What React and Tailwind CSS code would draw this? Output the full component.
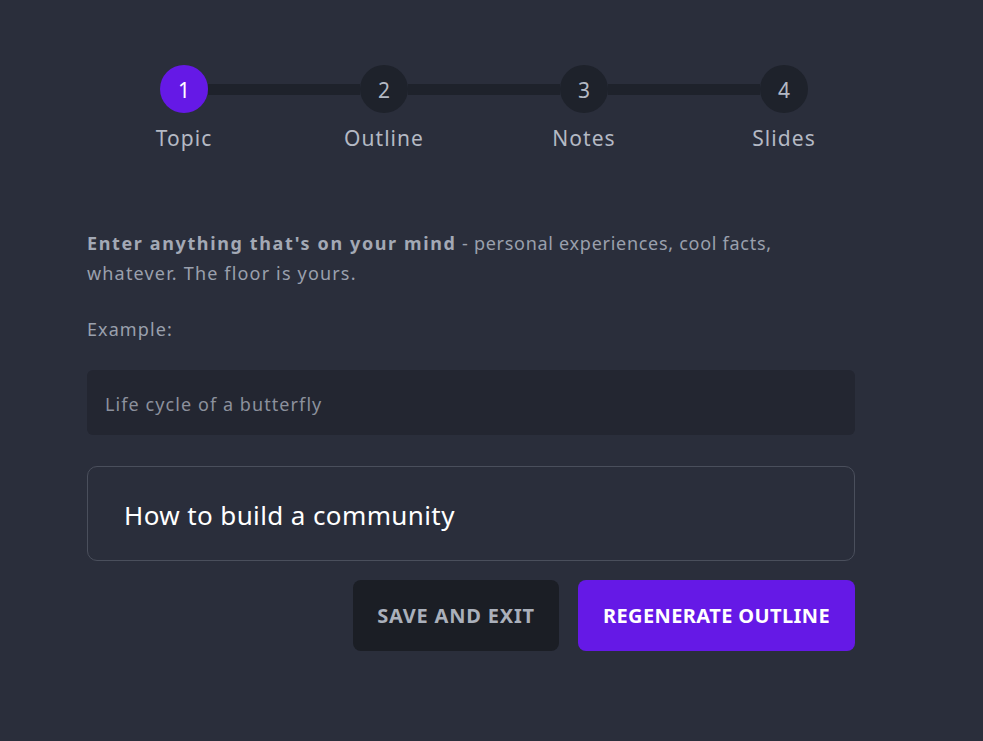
const steps = [
  { n: 1, label: 'Topic', active: true },
  { n: 2, label: 'Outline' },
  { n: 3, label: 'Notes' },
  { n: 4, label: 'Slides' },
];

export default function App() {
  return (
    <div className="min-h-screen w-full bg-[#2a2e3b] font-['Noto_Sans',sans-serif]">
      <div className="w-[768px] ml-[87px] pt-[65px]">
        {/* Stepper */}
        <div className="flex items-start w-[648px] ml-[73px]">
          {steps.map((s, i) => (
            <div key={s.n} className="contents">
              {i > 0 && <div className="flex-1 h-[11px] mt-[19px] bg-[#1e222b]" />}
              <div className="w-12 flex flex-col items-center">
                <div
                  className={`w-12 h-12 rounded-full flex items-center justify-center pt-[3px] text-[21px] ${
                    s.active ? 'bg-[#6519e6] text-white' : 'bg-[#1e222b] text-[#b4b9c4]'
                  }`}
                >
                  {s.n}
                </div>
                <span className="mt-[10px] text-[21px] leading-[30px] tracking-[0.05em] text-[#b4b9c4] whitespace-nowrap">
                  {s.label}
                </span>
              </div>
            </div>
          ))}
        </div>

        {/* Intro */}
        <p className="mt-[75px] text-[18px] leading-[30px] text-[#9aa0ad] whitespace-nowrap">
          <span className="font-bold tracking-[0.09em] text-[#a3a9b5]">Enter anything that's on your mind</span>
          <span className="tracking-[0.04em]"> - personal experiences, cool facts,</span>
          <br />
          <span className="tracking-[0.065em]">whatever. The floor is yours.</span>
        </p>
        <p className="mt-[26px] text-[18px] leading-[30px] tracking-[0.06em] text-[#9aa0ad]">Example:</p>

        <div className="mt-[26px] h-[65px] rounded-md bg-[#232631] flex items-center pt-[4px] px-[18px] text-[18px] tracking-[0.06em] text-[#8c919d]">
          Life cycle of a butterfly
        </div>

        <div className="mt-[31px] h-[95px] rounded-[10px] border border-[#4a4f5c] flex items-center pt-[3px] px-[36px] text-[26px] tracking-[0.015em] text-white">
          How to build a community
        </div>

        <div className="mt-[19px] flex justify-end gap-[19px]">
          <button className="w-[206px] h-[71px] rounded-lg bg-[#1b1e25] text-[#aab0bb] text-[20px] font-bold uppercase tracking-[0.04em]">
            Save and exit
          </button>
          <button className="w-[277px] h-[71px] rounded-lg bg-[#6519e6] text-white text-[20px] font-bold uppercase tracking-[0.02em]">
            Regenerate outline
          </button>
        </div>
      </div>
    </div>
  );
}
